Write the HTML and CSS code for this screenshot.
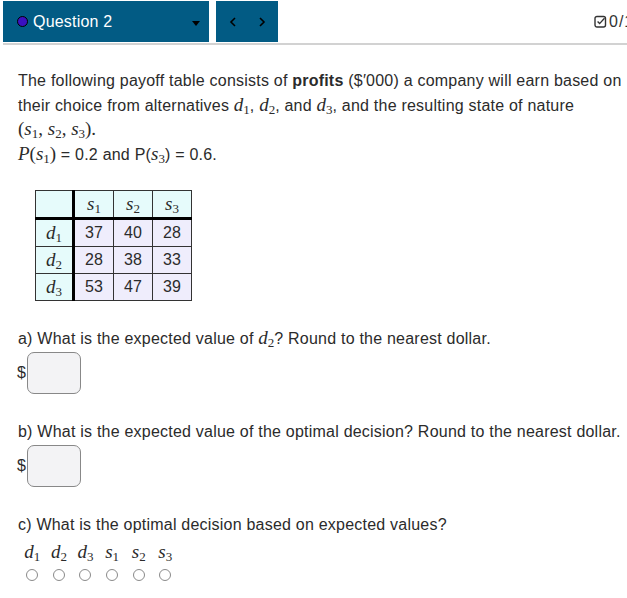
FILE: index.html
```html
<!DOCTYPE html>
<html>
<head>
<meta charset="utf-8">
<link rel="stylesheet" href="styles.css">
</head>
<body>
<div class="topbar">
  <div class="qselect">
    <span class="dot"></span>
    <span class="qtitle">Question 2</span>
    <span class="caret"></span>
  </div>
  <div class="qnav">
    <svg width="8" height="10" viewBox="0 0 8 10"><path d="M6 1 L2 5 L6 9" fill="none" stroke="#000" stroke-width="1.6"/></svg>
    <svg width="8" height="10" viewBox="0 0 8 10"><path d="M2 1 L6 5 L2 9" fill="none" stroke="#000" stroke-width="1.6"/></svg>
  </div>
  <div class="score">
    <svg width="13" height="13" viewBox="0 0 13 13"><rect x="1" y="1.5" width="10.5" height="10.5" rx="2" fill="none" stroke="#333" stroke-width="1.4"/><path d="M3.6 6.6 L5.6 8.6 L10.5 3.2" fill="none" stroke="#333" stroke-width="1.4"/></svg>
    <span class="pts">0/1 pts</span>
  </div>
</div>
<div class="rule"></div>

<main class="content">
  <p class="intro">The following payoff table consists of <b>profits</b> ($′000) a company will earn based on their choice from alternatives <span class="m"><i>d</i><sub>1</sub></span>, <span class="m"><i>d</i><sub>2</sub></span>, and <span class="m"><i>d</i><sub>3</sub></span>, and the resulting state of nature <span class="m">(<i>s</i><sub>1</sub>, <i>s</i><sub>2</sub>, <i>s</i><sub>3</sub>).</span><br><span class="m"><i>P</i>(<i>s</i><sub>1</sub>)</span> = 0.2 and P(<span class="m"><i>s</i><sub>3</sub></span>) = 0.6.</p>

  <table class="payoff">
    <tr class="head">
      <th class="corner"></th>
      <th><span class="m"><i>s</i><sub>1</sub></span></th>
      <th><span class="m"><i>s</i><sub>2</sub></span></th>
      <th><span class="m"><i>s</i><sub>3</sub></span></th>
    </tr>
    <tr>
      <th class="rowh"><span class="m"><i>d</i><sub>1</sub></span></th>
      <td>37</td><td>40</td><td>28</td>
    </tr>
    <tr>
      <th class="rowh"><span class="m"><i>d</i><sub>2</sub></span></th>
      <td>28</td><td>38</td><td>33</td>
    </tr>
    <tr>
      <th class="rowh"><span class="m"><i>d</i><sub>3</sub></span></th>
      <td>53</td><td>47</td><td>39</td>
    </tr>
  </table>

  <p class="q q-first">a) What is the expected value of <span class="m"><i>d</i><sub>2</sub></span>? Round to the nearest dollar.</p>
  <div class="answer"><span class="cur">$</span><span class="box"></span></div>

  <p class="q">b) What is the expected value of the optimal decision? Round to the nearest dollar.</p>
  <div class="answer"><span class="cur">$</span><span class="box"></span></div>

  <p class="q">c) What is the optimal decision based on expected values?</p>
  <div class="choices">
    <div class="choice"><span class="m"><i>d</i><sub>1</sub></span><span class="radio"></span></div>
    <div class="choice"><span class="m"><i>d</i><sub>2</sub></span><span class="radio"></span></div>
    <div class="choice"><span class="m"><i>d</i><sub>3</sub></span><span class="radio"></span></div>
    <div class="choice"><span class="m"><i>s</i><sub>1</sub></span><span class="radio"></span></div>
    <div class="choice"><span class="m"><i>s</i><sub>2</sub></span><span class="radio"></span></div>
    <div class="choice"><span class="m"><i>s</i><sub>3</sub></span><span class="radio"></span></div>
  </div>
</main>
</body>
</html>
```

FILE: styles.css
```css
html, body {
  margin: 0;
  overflow: hidden;
}
body {
  font-family: "Liberation Sans", Arial, sans-serif;
  font-size: 16px;
  color: #2b2b2b;
  background: #fff;
  width: 627px;
}
.topbar {
  display: flex;
  align-items: flex-start;
  gap: 7px;
  padding: 1px 0 0 3px;
  width: 624px;
}
.qselect {
  width: 206px;
  height: 41px;
  background: #025b84;
  display: flex;
  align-items: center;
  box-sizing: border-box;
  padding-left: 14px;
}
.dot {
  width: 9px;
  height: 9px;
  border-radius: 50%;
  background: #3a10c0;
  border: 1px solid #000;
  margin-right: 5px;
}
.qtitle {
  color: #fff;
  font-size: 16px;
  letter-spacing: 0.2px;
  flex: 1;
}
.caret {
  width: 0;
  height: 0;
  border-left: 4px solid transparent;
  border-right: 4px solid transparent;
  border-top: 5px solid #000;
  margin-right: 9px;
  margin-top: 3px;
}
.qnav {
  width: 62px;
  height: 41px;
  background: #025b84;
  display: flex;
  align-items: center;
  justify-content: center;
  gap: 21px;
}
.score {
  margin-left: auto;
  flex: 0 0 33px;
  min-width: 0;
  width: 33px;
  height: 41px;
  display: flex;
  align-items: center;
  gap: 2px;
  white-space: nowrap;
  font-size: 16px;
  color: #333;
}
.score svg {
  flex: none;
}
.pts {
  letter-spacing: 1px;
}
.rule {
  margin: 1px 0 0 3px;
  height: 2px;
  background: #d2d2d2;
}
.content {
  padding: 0 4px 0 18px;
  letter-spacing: 0.22px;
}
.m {
  font-family: "Liberation Serif", "DejaVu Serif", serif;
  font-size: 19px;
  line-height: 18px;
  letter-spacing: 0;
  white-space: nowrap;
}
.m i {
  font-style: italic;
}
.m sub {
  font-size: 13px;
  vertical-align: -3px;
  line-height: 0;
}
.intro {
  margin: 24px 0 0;
  line-height: 24.5px;
}
.intro b {
  font-weight: bold;
}
.payoff {
  border-collapse: collapse;
  margin: 23px 0 0 17px;
  letter-spacing: 0;
}
.payoff th, .payoff td {
  border: 1px solid #333;
  height: 26px;
  padding: 0;
  text-align: center;
  font-weight: normal;
}
.payoff td {
  background: #efedfc;
  width: 38px;
  font-size: 16px;
}
.payoff .head th {
  background: #e6fbfb;
  border-bottom: 3px solid #000;
  width: 38px;
}
.payoff .head th.corner {
  border-right: 3px solid #000;
  width: 36px;
}
.payoff .rowh {
  background: #e6fbfb;
  border-right: 3px solid #000;
}
.q {
  margin: 26px 0 0;
  line-height: 24px;
}
.q-first {
  margin-top: 26px;
}
.answer {
  display: flex;
  align-items: center;
  margin-top: 1px;
}
.cur {
  font-size: 16px;
  margin-left: -1px;
}
.box {
  width: 52px;
  height: 40px;
  border: 1px solid #888;
  border-radius: 7px;
  background: #f3f3f5;
  margin-left: 1px;
}
.choices {
  display: flex;
  margin-top: 3px;
  margin-left: 1px;
}
.choice {
  width: 26.6px;
  display: flex;
  flex-direction: column;
  align-items: center;
  gap: 5px;
}
.choice .m {
  line-height: 24px;
}
.radio {
  width: 10px;
  height: 10px;
  border: 1px solid #8a8a8a;
  border-radius: 50%;
  background: #fff;
}
```
